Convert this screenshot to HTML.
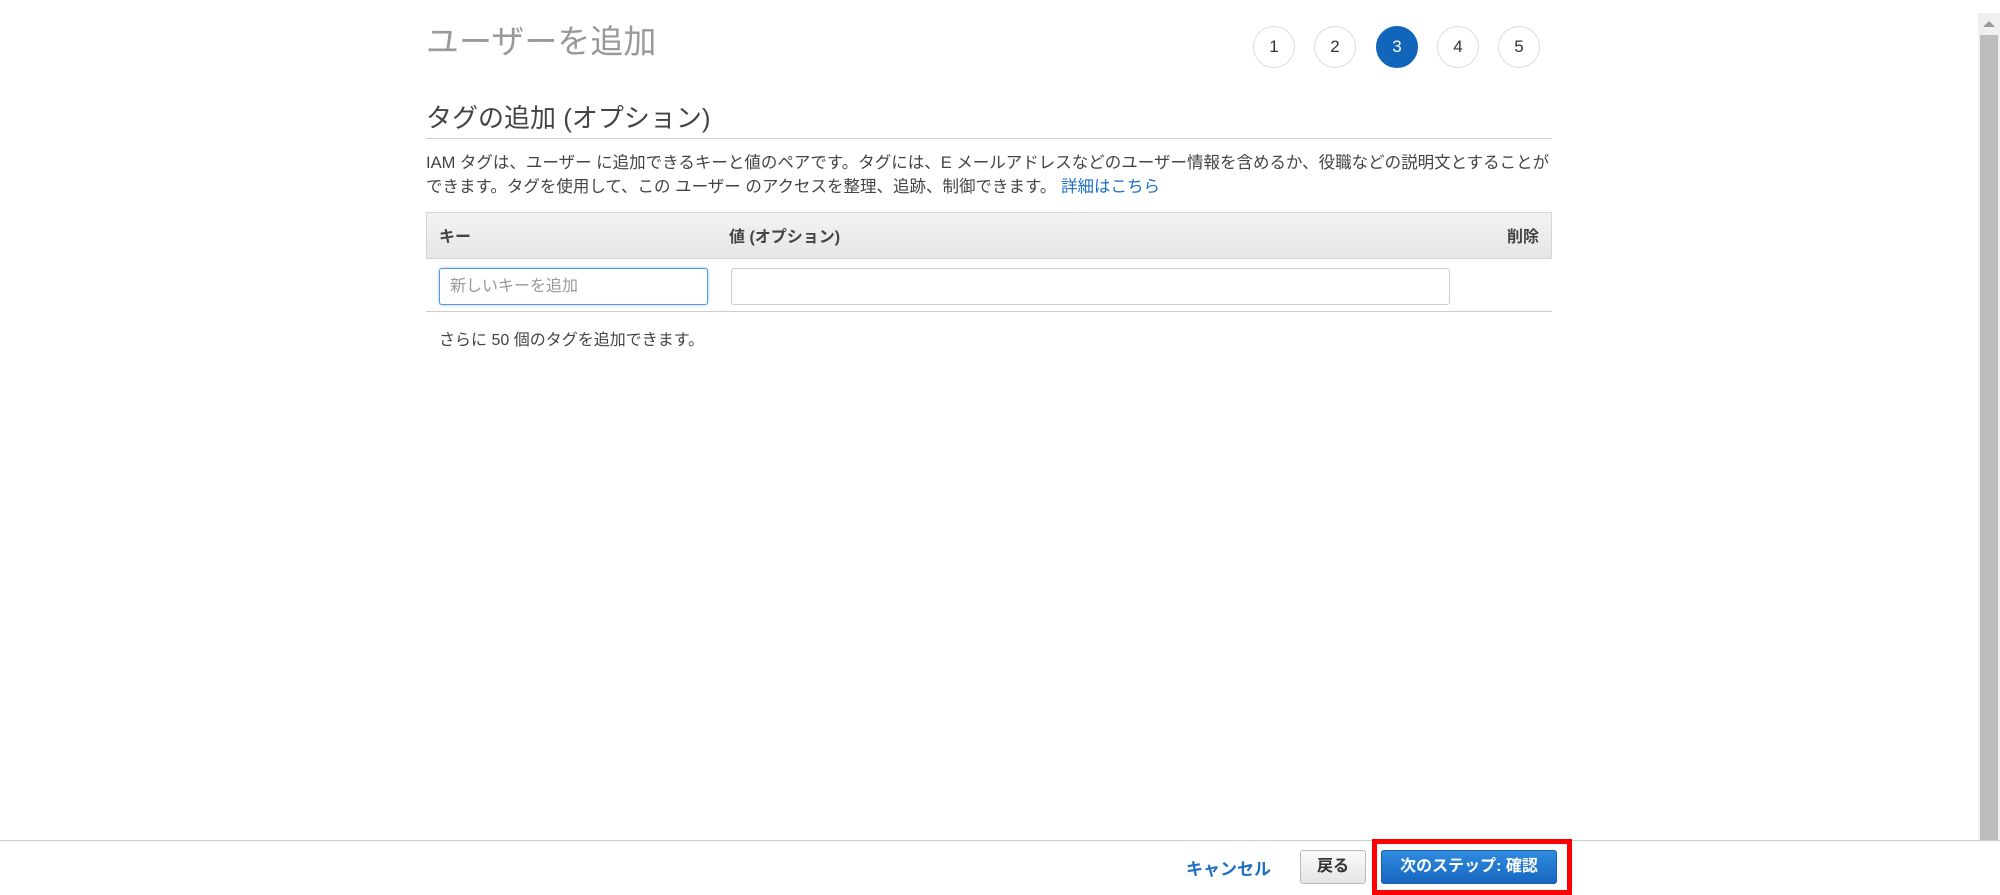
<!DOCTYPE html>
<html><head><meta charset="utf-8"><style>
*{box-sizing:border-box;margin:0;padding:0}
body{width:2000px;height:895px;overflow:hidden;background:#fff;font-family:"Liberation Sans","Noto Sans CJK JP",sans-serif;color:#444;position:relative}
.abs{position:absolute}
.title{left:426px;top:15px;font-size:33px;color:#999;white-space:nowrap}
.step{width:42px;height:42px;border-radius:50%;border:1px solid #ddd;top:26px;font-size:17px;color:#333;text-align:center;line-height:40px}
.step.on{background:#1166bb;border-color:#1166bb;color:#fff}
h2{position:absolute;left:426px;top:98px;font-size:26px;font-weight:normal;color:#444;white-space:nowrap}
.hr{left:426px;width:1126px;height:1px;background:#ccc}
.p{left:426px;top:151px;width:1130px;font-size:16.5px;line-height:24px;color:#444}
a{color:#1f6fc5;text-decoration:none}
.th{left:426px;top:212px;width:1126px;height:47px;background:linear-gradient(#f3f3f3,#e6e6e6);border:1px solid #d5d5d5;font-size:16px;font-weight:bold;color:#444}
.th span{position:absolute;top:10px}
.in{top:268px;height:37px;border:1px solid #ccc;border-radius:3px;background:#fff}
.btn{border-radius:3px;font-size:16px;font-weight:bold;text-align:center}
</style></head><body>
<div class="abs title">ユーザーを追加</div>
<div class="abs step" style="left:1253px">1</div>
<div class="abs step" style="left:1314px">2</div>
<div class="abs step on" style="left:1376px">3</div>
<div class="abs step" style="left:1437px">4</div>
<div class="abs step" style="left:1498px">5</div>
<h2>タグの追加 (オプション)</h2>
<div class="abs hr" style="top:138px"></div>
<div class="abs p">IAM タグは、ユーザー に追加できるキーと値のペアです。タグには、E メールアドレスなどのユーザー情報を含めるか、役職などの説明文とすることが<br>できます。タグを使用して、この ユーザー のアクセスを整理、追跡、制御できます。 <a>詳細はこちら</a></div>
<div class="abs th"><span style="left:12px">キー</span><span style="left:302px">値 (オプション)</span><span style="right:12px">削除</span></div>
<div class="abs in" style="left:439px;width:269px;border-color:#5b9bd5;box-shadow:0 0 3px #9cc3ec;font-size:16px;color:#999;line-height:35px;padding-left:10px">新しいキーを追加</div>
<div class="abs in" style="left:731px;width:719px"></div>
<div class="abs hr" style="top:311px"></div>
<div class="abs" style="left:439px;top:326px;font-size:16px;color:#444">さらに 50 個のタグを追加できます。</div>
<div class="abs" style="left:1978px;top:13px;width:22px;height:827px;background:#f0f0f0"></div>
<div class="abs" style="left:1983px;top:21px;width:0;height:0;border-left:6px solid transparent;border-right:6px solid transparent;border-bottom:6px solid #999"></div>
<div class="abs" style="left:1980px;top:35px;width:18px;height:805px;background:#bdbdbd"></div>
<div class="abs" style="left:0;top:840px;width:2000px;height:1px;background:#ccc"></div>
<div class="abs" style="left:1186px;top:855px;font-size:17px;font-weight:bold;color:#1f6fc5">キャンセル</div>
<div class="abs btn" style="left:1300px;top:850px;width:66px;height:34px;border:1px solid #bbb;background:linear-gradient(#fafafa,#e5e5e5);color:#333;line-height:32px">戻る</div>
<div class="abs" style="left:1372px;top:839px;width:200px;height:56px;border:5px solid #f00"></div>
<div class="abs btn" style="left:1381px;top:850px;width:176px;height:34px;border:1px solid #1a5fa8;background:linear-gradient(#2f8be0,#1766c0);color:#fff;line-height:32px">次のステップ: 確認</div>
</body></html>
